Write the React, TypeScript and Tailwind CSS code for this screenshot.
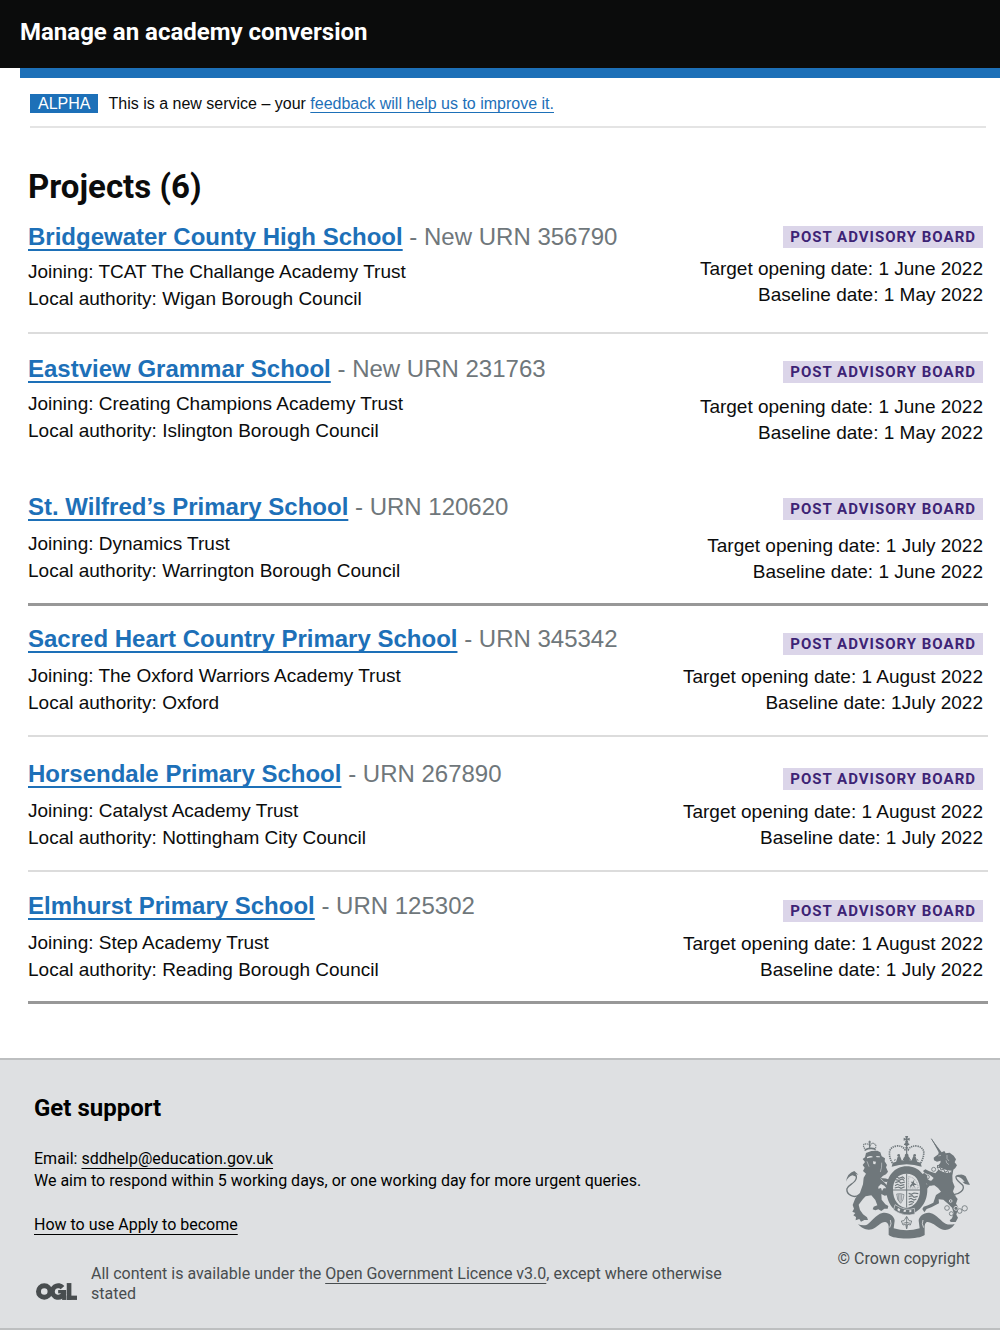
import React from "react";

type Project = {
  name: string;
  urn: string;
  joining: string;
  authority: string;
  opening: string;
  baseline: string;
  row: string;
  details: string;
  status: string;
  dates: string;
};

const projects: Project[] = [
  {
    name: "Bridgewater County High School",
    urn: "New URN 356790",
    joining: "TCAT The Challange Academy Trust",
    authority: "Wigan Borough Council",
    opening: "1 June 2022",
    baseline: "1 May 2022",
    row: "pb-5 border-b-2 border-[#dcdcdc]",
    details: "mt-[5px]",
    status: "pt-[5px]",
    dates: "mt-2",
  },
  {
    name: "Eastview Grammar School",
    urn: "New URN 231763",
    joining: "Creating Champions Academy Trust",
    authority: "Islington Borough Council",
    opening: "1 June 2022",
    baseline: "1 May 2022",
    row: "pt-[19px] pb-[25px]",
    details: "mt-[5px]",
    status: "pt-2",
    dates: "mt-[11px]",
  },
  {
    name: "St. Wilfred’s Primary School",
    urn: "URN 120620",
    joining: "Dynamics Trust",
    authority: "Warrington Borough Council",
    opening: "1 July 2022",
    baseline: "1 June 2022",
    row: "pt-5 pb-[18px] border-b-3 border-[#989898]",
    details: "mt-[7px]",
    status: "pt-[7px]",
    dates: "mt-[13px]",
  },
  {
    name: "Sacred Heart Country Primary School",
    urn: "URN 345342",
    joining: "The Oxford Warriors Academy Trust",
    authority: "Oxford",
    opening: "1 August 2022",
    baseline: "1July 2022",
    row: "pt-[17px] pb-[19px] border-b-2 border-[#dcdcdc]",
    details: "mt-[7px]",
    status: "pt-[10px]",
    dates: "mt-[9px]",
  },
  {
    name: "Horsendale Primary School",
    urn: "URN 267890",
    joining: "Catalyst Academy Trust",
    authority: "Nottingham City Council",
    opening: "1 August 2022",
    baseline: "1 July 2022",
    row: "pt-[21px] pb-[19px] border-b-2 border-[#dcdcdc]",
    details: "mt-[7px]",
    status: "pt-[10px]",
    dates: "mt-[9px]",
  },
  {
    name: "Elmhurst Primary School",
    urn: "URN 125302",
    joining: "Step Academy Trust",
    authority: "Reading Borough Council",
    opening: "1 August 2022",
    baseline: "1 July 2022",
    row: "pt-[18px] pb-[18px] border-b-3 border-[#989898]",
    details: "mt-[7px]",
    status: "pt-[10px]",
    dates: "mt-[9px]",
  },
];

function ProjectRow({ project }: { project: Project }) {
  return (
    <li className={`flex justify-between ${project.row}`}>
      <div>
        <h2 className="text-2xl leading-8 text-[#6f777b]">
          <a
            href="#"
            className="font-bold text-[#1d70b8] underline decoration-2 underline-offset-4 [text-decoration-skip-ink:none]"
          >
            {project.name}
          </a>{" "}
          - {project.urn}
        </h2>
        <div className={`text-[19px] leading-[27px] text-[#0b0c0c] ${project.details}`}>
          <p>Joining: {project.joining}</p>
          <p>Local authority: {project.authority}</p>
        </div>
      </div>
      <div className={`flex flex-col items-end pr-[5px] ${project.status}`}>
        <strong className="bg-[#dbd5e9] px-[7px] font-[Roboto] text-[15px] leading-[22px] font-bold tracking-[1px] text-[#3d2375]">
          POST ADVISORY BOARD
        </strong>
        <div className={`text-right text-[19px] leading-[26px] text-[#0b0c0c] ${project.dates}`}>
          <p>Target opening date: {project.opening}</p>
          <p>Baseline date: {project.baseline}</p>
        </div>
      </div>
    </li>
  );
}

function OglLogo() {
  return (
    <svg viewBox="48 70 124 51" className="mb-1 h-[17px] w-[41px] shrink-0" aria-label="OGL" role="img" fill="#484d4f">
      <circle cx="73" cy="95.500" r="17.500" fill="none" stroke="#484d4f" strokeWidth="15" />
      <circle
        cx="115"
        cy="95.500"
        r="17.500"
        fill="none"
        stroke="#484d4f"
        strokeWidth="15"
        strokeDasharray="92 18"
        transform="rotate(10 115 95.500)"
      />
      <rect x="115" y="91" width="24" height="10" />
      <rect x="127" y="91" width="12" height="30" />
      <rect x="141" y="70" width="14" height="51" />
      <rect x="141" y="108" width="31" height="13" />
    </svg>
  );
}

function RoyalArms() {
  const ink = "#6f777b";
  const paper = "#dee0e2";
  return (
    <svg viewBox="48 32 372 309" className="h-[103px] w-[124px]" role="img" aria-label="Royal coat of arms" fill={ink}>
      {/* ribbon */}
      <path d="M84 297 Q99 302 111 298 C124 290 137 268 157 263 C176 259 194 274 194 286 L191 309 Q230 321 269 309 L266 286 C266 274 284 259 301 263 C320 268 334 289 347 295 Q358 300 374 296 C366 311 348 318 333 311 C317 301 302 288 290 290 Q284 294 284 302 L284 329 C266 343 192 343 176 329 L176 303 Q175 292 166 290 C154 289 140 306 126 312 C110 317 94 308 84 297 Z" />
      <path d="M179 307 Q186 295 181 284 M281 307 Q274 295 279 284" fill="none" stroke={paper} strokeWidth="2.500" />

      {/* supporter with crown on the left */}
      <path d="M108 83 L124 77 L142 76 L151 81 L155 93 L165 99 L164 108 L171 119 L168 126 L174 139 L168 147 L159 151 L151 160 L164 172 L178 187 L184 201 L187 210 L174 209 L164 211 L154 206 L155 223 L166 237 L175 242 L173 250 L163 250 L154 257 L145 252 L136 255 L128 252 L131 244 L142 240 L136 224 L124 210 L107 213 L99 221 L86 238 L90 254 L99 267 L111 276 L114 284 L103 284 L93 289 L88 281 L77 285 L78 275 L70 270 L76 263 L67 259 L72 250 L68 239 L76 219 L90 202 L99 177 L101 157 L108 145 L99 137 L104 127 L98 119 L105 110 L98 101 L105 96 Z" />
      <path d="M151 158 Q169 158 181 164 L170 170 L162 169 Z" />
      <path d="M111 95 L120 92 L127 93 L128 96 L119 97 L111 99 Z M138 92 L149 93 L150 96 L140 96 Z M129 108 L138 109 L136 117 L130 116 Z" fill={paper} />
      <path d="M111 108 L117 124 M155 112 Q156 127 151 140" fill="none" stroke={paper} strokeWidth="1.600" />
      <path d="M153 176 L145 184 L145 190 L153 188 L156 197 L161 189 L169 189 L163 181 Z" fill={paper} />
      <path d="M106 76 L100 61 Q101 53 110 57 Q119 53 119 66 Q121 52 130 54 Q140 57 137 67 L135 75" fill="none" stroke={ink} strokeWidth="3.500" strokeDasharray="4 2" />
      <path d="M106 76 Q120 69 136 74 L135 68 Q120 64 105 71 Z" />
      <path d="M119 46 V68 M115 50 H123" stroke={ink} strokeWidth="3" />
      <path d="M87 208 C72 221 48 207 51 190 C54 178 76 175 79 158 Q80 144 69 145" fill="none" stroke={ink} strokeWidth="4" />
      <path d="M48 169 Q52 143 73 137 L85 148 L75 145 L81 155 L67 150 Q53 155 48 169 Z" />

      {/* central crown */}
      <path d="M188 112 Q230 96 272 112 L275 124 Q230 109 185 124 Z" />
      <path d="M187 113 Q176 94 179 77 Q184 64 199 62 Q217 60 225 73 L230 65 L235 73 Q243 60 261 62 Q276 64 281 77 Q283 94 272 113" fill="none" stroke={ink} strokeWidth="5" strokeDasharray="4 2.500" />
      <path d="M230 48 V111 M222 57 H238" stroke={ink} strokeWidth="3.500" />
      <circle cx="230" cy="56" r="6" />
      <path d="M225 31 H235 L232 40 L239 37 V46 L232 43 L235 51 H225 L228 43 L221 46 V37 L228 40 Z" />
      <path d="M224 109 Q216 99 224 94 Q223 87 230 84 Q237 87 236 94 Q244 99 236 109 Z" />
      <path d="M198 111 L203 94 L210 92 L216 108 Z M244 108 L250 92 L257 94 L262 111 Z" />
      <path d="M192 105 L197 103 M265 105 L260 102 M218 105 L222 101 M239 101 L243 105" stroke={ink} strokeWidth="3" />
      <circle cx="206" cy="90" r="4" />
      <circle cx="254" cy="90" r="4" />

      {/* garter and shield */}
      <path fillRule="evenodd" d="M230 123 C268 123 292 153 292 193 C292 235 264 266 230 269 C195 266 169 234 169 193 C169 153 194 123 230 123 Z M230 145 C203 145 189 165 189 194 C189 224 206 246 230 248 C253 245 270 224 270 194 C270 165 256 145 230 145 Z" />
      <path d="M230 145 V247 M189 194 H270" stroke={ink} strokeWidth="3" />
      <path d="M201 155 L207 159 L218 155 L224 160 M196 163 L207 165 L217 161 L223 166 M196 172 L207 168 L212 173 L225 170 M195 181 L202 177 L212 181 L223 178 M194 188 L206 185 L213 189 L224 184" fill="none" stroke={ink} strokeWidth="3.500" />
      <path d="M236 204 L244 207 L252 203 L265 205 M236 214 L247 211 L252 216 L263 213 M236 222 L243 219 L252 224 L259 221 M236 231 L244 228 L252 231 M236 239 L248 235" fill="none" stroke={ink} strokeWidth="3.500" />
      <path d="M236 154 Q261 157 265 188 H236 Z" fill="none" stroke={ink} strokeWidth="1.500" strokeDasharray="3 2" />
      <path d="M240 181 L246 174 L242 169 L249 169 L253 161 L252 172 L261 179 L252 179 L255 187 L247 180 L242 187 Z" />
      <path d="M200 206 Q213 203 222 208 L219 223 L212 234 Q201 226 200 206 Z M205 207 V225 M210 206 V231 M215 207 V226" fill="none" stroke={ink} strokeWidth="2" />
      <path d="M195 238 Q227 259 253 249 L255 266 Q223 276 191 254 Z" stroke={paper} strokeWidth="2" />
      <path d="M204 248 L211 252 L208 259 L202 254 Z M222 254 L228 254 L227 260 L220 259 Z M238 255 L244 254 V260 L238 261 Z" fill={paper} />

      {/* pendant flower */}
      <path d="M230 273 L237 286 L245 287 L241 299 L233 297 L230 311 L227 297 L219 299 L214 287 L222 286 Z M230 275 V308 M220 294 L230 291 L240 294" fill={paper} stroke={ink} strokeWidth="2.500" />

      {/* supporter with horn on the right */}
      <path d="M304 40 L335 81 L343 77 L347 84 L359 82 L371 91 L378 102 L374 111 L381 120 L376 128 L370 133 L367 151 L368 169 L374 184 L369 198 L374 210 L383 221 L378 235 L385 246 L379 268 L384 277 L377 290 L362 290 L359 285 L366 279 L371 263 L366 247 L354 235 L340 223 L326 222 L327 234 L304 246 L290 251 L283 261 L277 251 L281 244 L294 240 L310 232 L318 209 L333 199 L324 188 L313 180 L299 181 L291 190 L286 181 L292 177 L285 169 L281 157 L276 147 L283 143 L291 150 L293 162 L303 168 L311 158 L299 148 L284 143 L279 137 L286 132 L298 138 L316 144 L324 135 L322 123 L331 113 L332 106 L321 109 L312 105 L311 97 L325 87 L326 81 Z" />
      <path d="M304 40 L331 82" stroke={ink} strokeWidth="3" />
      <path d="M325 92 L333 90 M351 89 Q348 101 357 107 M348 105 Q348 114 357 118" fill="none" stroke={paper} strokeWidth="1.600" />
      <path d="M323 121 Q340 135 365 136 L363 143 Q337 144 320 128 Z" fill={paper} />
      <path d="M323 119 L322 128 L330 126 L333 134 L341 132 L345 141 L353 136 L358 145 L364 138" fill="none" stroke={ink} strokeWidth="3" />
      <path d="M371 208 C389 207 404 193 399 181 C393 173 376 166 378 154 Q382 146 398 154" fill="none" stroke={ink} strokeWidth="4" />
      <path d="M379 154 Q393 141 407 153 Q413 167 420 178 Q407 181 397 169 L404 170 Q394 154 379 154 Z" />
      <g fill="none" stroke={ink} strokeWidth="2.500">
        <circle cx="311" cy="132" r="6" />
        <circle cx="292" cy="155" r="6" />
        <circle cx="303" cy="173" r="6" />
        <circle cx="351" cy="248" r="7" />
        <circle cx="364" cy="265" r="6" />
        <circle cx="378" cy="249" r="6" stroke={paper} />
        <circle cx="389" cy="257" r="7" />
        <circle cx="404" cy="249" r="8" />
        <circle cx="370" cy="211" r="5" />
        <circle cx="362" cy="227" r="4" stroke={paper} />
      </g>
    </svg>
  );
}

export default function App() {
  return (
    <div className="min-h-screen bg-white font-['Liberation_Sans',Arial,sans-serif] text-[#0b0c0c]">
      <header>
        <div className="bg-[#0b0c0c] px-5 pt-4 pb-5">
          <p className="font-[Roboto] text-2xl leading-8 font-bold text-white">Manage an academy conversion</p>
        </div>
        <div className="ml-5 h-[10px] bg-[#1d70b8]" />
      </header>

      <div className="mr-[14px] ml-[30px] flex items-center border-b-2 border-[#e4e4e4] pt-4 pb-[13px] text-base leading-[19px]">
        <strong className="bg-[#1d70b8] px-2 font-normal text-white">ALPHA</strong>
        <p className="ml-[10px]">
          This is a new service – your{" "}
          <a href="#" className="text-[#1d70b8] underline underline-offset-3 [text-decoration-skip-ink:none]">
            feedback will help us to improve it.
          </a>
        </p>
      </div>

      <main className="pt-[39px] pr-3 pb-[54px] pl-7">
        <h1 className="mb-[14px] font-[Roboto] text-[33px] leading-10 font-bold">Projects (6)</h1>
        <ul>
          {projects.map((project) => (
            <ProjectRow key={project.name} project={project} />
          ))}
        </ul>
      </main>

      <footer className="flex items-end justify-between border-y-2 border-[#bdbfc0] bg-[#dee0e2] pt-8 pr-[30px] pb-6 pl-[34px] font-[Roboto] text-base leading-[22px] text-black">
        <div className="max-w-[700px]">
          <h2 className="text-2xl leading-8 font-bold">Get support</h2>
          <p className="mt-6">
            Email:{" "}
            <a href="mailto:sddhelp@education.gov.uk" className="underline underline-offset-4 [text-decoration-skip-ink:none]">
              sddhelp@education.gov.uk
            </a>
          </p>
          <p>We aim to respond within 5 working days, or one working day for more urgent queries.</p>
          <p className="mt-[22px]">
            <a href="#" className="underline underline-offset-4 [text-decoration-skip-ink:none]">
              How to use Apply to become
            </a>
          </p>
          <div className="mt-7 flex items-end gap-[14px] pl-[2px] text-[#484d4f]">
            <OglLogo />
            <p className="leading-5">
              All content is available under the{" "}
              <a href="#" className="underline underline-offset-4 [text-decoration-skip-ink:none]">
                Open Government Licence v3.0
              </a>
              , except where otherwise stated
            </p>
          </div>
        </div>
        <a href="#" className="mb-[34px] flex flex-col items-end gap-[9px] text-[#484d4f]">
          <RoyalArms />
          <span>© Crown copyright</span>
        </a>
      </footer>
    </div>
  );
}
